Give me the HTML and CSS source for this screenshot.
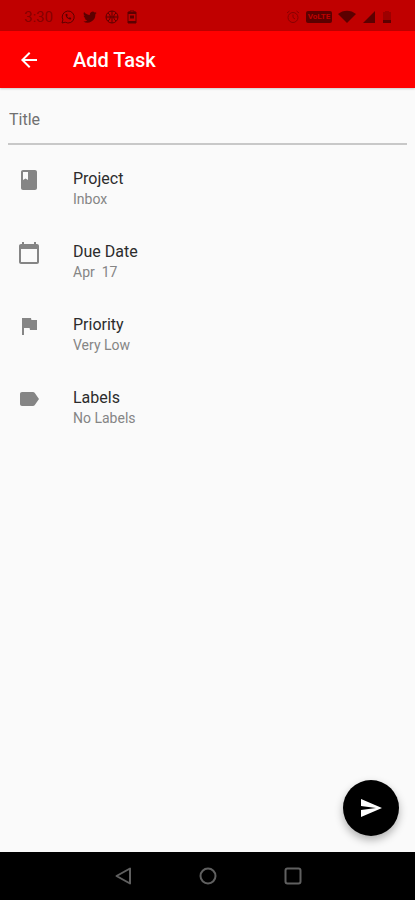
FILE: index.html
```html
<!DOCTYPE html>
<html lang="en">
<head>
  <meta charset="UTF-8">
  <meta name="viewport" content="width=device-width, initial-scale=1.0">
  <title>Add Task</title>
  <link rel="stylesheet" href="styles.css">
</head>
<body>
  <div class="status-bar">
    <div class="status-left">
      <span class="clock">3:30</span>
      <!-- whatsapp -->
      <svg class="status-icon" viewBox="0 0 14 14" fill="none" stroke="currentColor">
        <path d="M1 13l.9-3.200A6 6 0 1 1 4.200 12.200z"/>
        <path d="M4.500 4.200c0 2.800 2.500 5.300 5.300 5.300l.5-1.500-1.600-.8-.8.8C7 7.600 6.400 7 6 6.100l.8-.8L6 3.700z" fill="currentColor" stroke="none"/>
      </svg>
      <!-- twitter -->
      <svg class="status-icon" viewBox="0 0 24 24" fill="currentColor">
        <path d="M23.600 4.900c-.8.400-1.700.6-2.700.8 1-.6 1.700-1.500 2.100-2.600-.9.500-1.900.9-3 1.100a4.800 4.800 0 0 0-8.200 4.300C7.800 8.300 4.300 6.400 1.900 3.500a4.800 4.800 0 0 0 1.500 6.400c-.8 0-1.500-.2-2.200-.6 0 2.300 1.600 4.300 3.900 4.800-.7.200-1.400.2-2.200.1.600 1.900 2.400 3.300 4.500 3.300A9.600 9.600 0 0 1 .4 19.500 13.600 13.600 0 0 0 21.200 7.400c1-.7 1.800-1.500 2.400-2.500z"/>
      </svg>
      <!-- basketball -->
      <svg class="status-icon" viewBox="0 0 14 14" fill="none" stroke="currentColor">
        <circle cx="7" cy="7" r="6"/>
        <path d="M1 7h12M7 1v12M3 3c3 2 3 6 0 8M11 3c-3 2-3 6 0 8"/>
      </svg>
      <!-- battery saver -->
      <svg class="status-icon battery" viewBox="0 0 10 14">
        <path d="M3 1h4v1h2v11H1V2h2z" fill="none" stroke="currentColor"/>
        <path d="M1 2h8v2H1zM1 11h8v2H1zM3 5.500h4v3H3z" fill="currentColor"/>
      </svg>
    </div>
    <div class="status-right">
      <!-- alarm -->
      <svg class="status-icon faded" viewBox="0 0 14 14" fill="none" stroke="currentColor">
        <circle cx="7" cy="7.500" r="5"/>
        <path d="M7 4.500v3l2 1.500M1 3l2.500-2M13 3l-2.500-2"/>
      </svg>
      <span class="volte">VoLTE</span>
      <svg class="status-icon wifi" viewBox="0 0 18 14" fill="currentColor">
        <path d="M9 13L0 4c5-4.500 13-4.500 18 0z"/>
      </svg>
      <svg class="status-icon" viewBox="0 0 14 14" fill="currentColor">
        <path d="M13 1v12H1z"/>
      </svg>
      <svg class="status-icon battery" viewBox="0 0 10 14" fill="currentColor">
        <path d="M3 1h4v1h2v8H1V2h2z" opacity=".35"/>
        <path d="M1 10h8v3H1z"/>
      </svg>
    </div>
  </div>

  <header class="app-bar">
    <button class="back-button" type="button" aria-label="Back">
      <svg class="icon" viewBox="0 0 24 24"><path d="M20 11H7.830l5.590-5.590L12 4l-8 8 8 8 1.410-1.410L7.830 13H20v-2z"/></svg>
    </button>
    <h1>Add Task</h1>
  </header>

  <main class="content">
    <form id="task-form">
      <input class="title-input" type="text" name="title" placeholder="Title" aria-label="Title">
    </form>

    <div class="options">
      <button class="option" type="button">
        <svg class="icon" viewBox="0 0 24 24"><path d="M18 2H6c-1.100 0-2 .9-2 2v16c0 1.100.9 2 2 2h12c1.100 0 2-.9 2-2V4c0-1.100-.9-2-2-2zM6 4h5v8l-2.500-1.500L6 12V4z"/></svg>
        <span class="option-text">
          <span class="option-name">Project</span>
          <span class="option-value">Inbox</span>
        </span>
      </button>
      <button class="option" type="button">
        <svg class="icon" viewBox="0 0 24 24"><path d="M20 3h-1V1h-2v2H7V1H5v2H4c-1.100 0-2 .9-2 2v16c0 1.100.9 2 2 2h16c1.100 0 2-.9 2-2V5c0-1.100-.9-2-2-2zm0 18H4V8h16v13z"/></svg>
        <span class="option-text">
          <span class="option-name">Due Date</span>
          <span class="option-value">Apr&nbsp; 17</span>
        </span>
      </button>
      <button class="option" type="button">
        <svg class="icon" viewBox="0 0 24 24"><path d="M14.400 6L14 4H5v17h2v-7h5.600l.4 2h7V6z"/></svg>
        <span class="option-text">
          <span class="option-name">Priority</span>
          <span class="option-value">Very Low</span>
        </span>
      </button>
      <button class="option" type="button">
        <svg class="icon" viewBox="0 0 24 24"><path d="M17.630 5.840C17.270 5.330 16.670 5 16 5L5 5.010C3.900 5.010 3 5.900 3 7v10c0 1.100.9 1.990 2 1.990L16 19c.67 0 1.270-.33 1.630-.84L22 12l-4.370-6.160z"/></svg>
        <span class="option-text">
          <span class="option-name">Labels</span>
          <span class="option-value">No Labels</span>
        </span>
      </button>
    </div>

    <button class="send-button" type="submit" form="task-form" aria-label="Save task">
      <svg class="icon" viewBox="0 0 24 24"><path d="M2.010 21L23 12 2.010 3 2 10l15 2-15 2z"/></svg>
    </button>
  </main>

  <nav class="nav-bar">
    <button type="button" aria-label="Back">
      <svg viewBox="0 0 20 20"><path d="M17 2.500v15L3.500 10z"/></svg>
    </button>
    <button type="button" aria-label="Home">
      <svg viewBox="0 0 20 20"><circle cx="10" cy="10" r="7.500"/></svg>
    </button>
    <button type="button" aria-label="Recent apps">
      <svg viewBox="0 0 20 20"><rect x="2.500" y="2.500" width="15" height="15" rx="2"/></svg>
    </button>
  </nav>
</body>
</html>
```

FILE: styles.css
```css
* {
  box-sizing: border-box;
}

body {
  margin: 0;
  min-height: 100vh;
  display: flex;
  flex-direction: column;
  font-family: Roboto, sans-serif;
  background-color: #fafafa;
}

button {
  padding: 0;
  border: none;
  background: none;
  color: inherit;
  font: inherit;
  cursor: pointer;
}

.icon {
  display: block;
  flex: none;
  width: 24px;
  height: 24px;
  fill: currentColor;
}

/* Status bar */
.status-bar {
  display: flex;
  justify-content: space-between;
  align-items: center;
  height: 31px;
  padding: 2px 23px 0 24px;
  background-color: #c00000;
  color: #5c0000;
}

.status-left,
.status-right {
  display: flex;
  align-items: center;
  gap: 8px;
}

.status-right {
  gap: 6px;
}

.clock {
  font-size: 15px;
  color: #860000;
}

.status-icon {
  display: block;
  width: 14px;
  height: 14px;
}

.status-icon.battery {
  width: 10px;
}

.status-icon.wifi {
  width: 18px;
}

.faded {
  color: #860000;
}

.volte {
  width: 26px;
  border-radius: 2px;
  background-color: #5c0000;
  color: #c00000;
  font-size: 8px;
  font-weight: 700;
  line-height: 12px;
  text-align: center;
}

/* App bar */
.app-bar {
  display: flex;
  align-items: center;
  gap: 32px;
  height: 57px;
  padding: 1px 17px 0;
  background-color: #ff0000;
  color: white;
  box-shadow: 0 1px 2px rgba(0, 0, 0, 0.2);
}

.app-bar h1 {
  margin: 0;
  font-size: 20px;
  font-weight: 500;
}

/* Form */
.content {
  position: relative;
  flex: 1;
  padding: 8px 8px 96px;
}

.title-input {
  display: block;
  width: 100%;
  height: 49px;
  padding: 0 1px;
  border: none;
  border-bottom: 2px solid #c8c8c8;
  outline: none;
  background: none;
  font-family: inherit;
  font-size: 16px;
  color: #212121;
}

.title-input::placeholder {
  color: #707070;
  opacity: 1;
}

.options {
  padding-top: 8px;
}

.option {
  display: flex;
  align-items: flex-start;
  gap: 32px;
  width: 100%;
  padding: 15px 9px 16px;
  color: #858585;
  text-align: left;
}

.option-text {
  display: flex;
  flex-direction: column;
  line-height: 21px;
}

.option-name {
  font-size: 16px;
  color: #2c2c2c;
}

.option-value {
  font-size: 14px;
}

.send-button {
  position: absolute;
  right: 16px;
  bottom: 16px;
  display: flex;
  align-items: center;
  justify-content: center;
  width: 56px;
  height: 56px;
  border-radius: 50%;
  background-color: black;
  color: white;
  box-shadow: 0 4px 8px rgba(0, 0, 0, 0.3);
}

/* System navigation */
.nav-bar {
  display: flex;
  justify-content: center;
  align-items: center;
  gap: 65px;
  height: 48px;
  background-color: black;
}

.nav-bar svg {
  display: block;
  width: 20px;
  height: 20px;
  fill: none;
  stroke: #606060;
  stroke-width: 2;
  stroke-linejoin: round;
}
```
